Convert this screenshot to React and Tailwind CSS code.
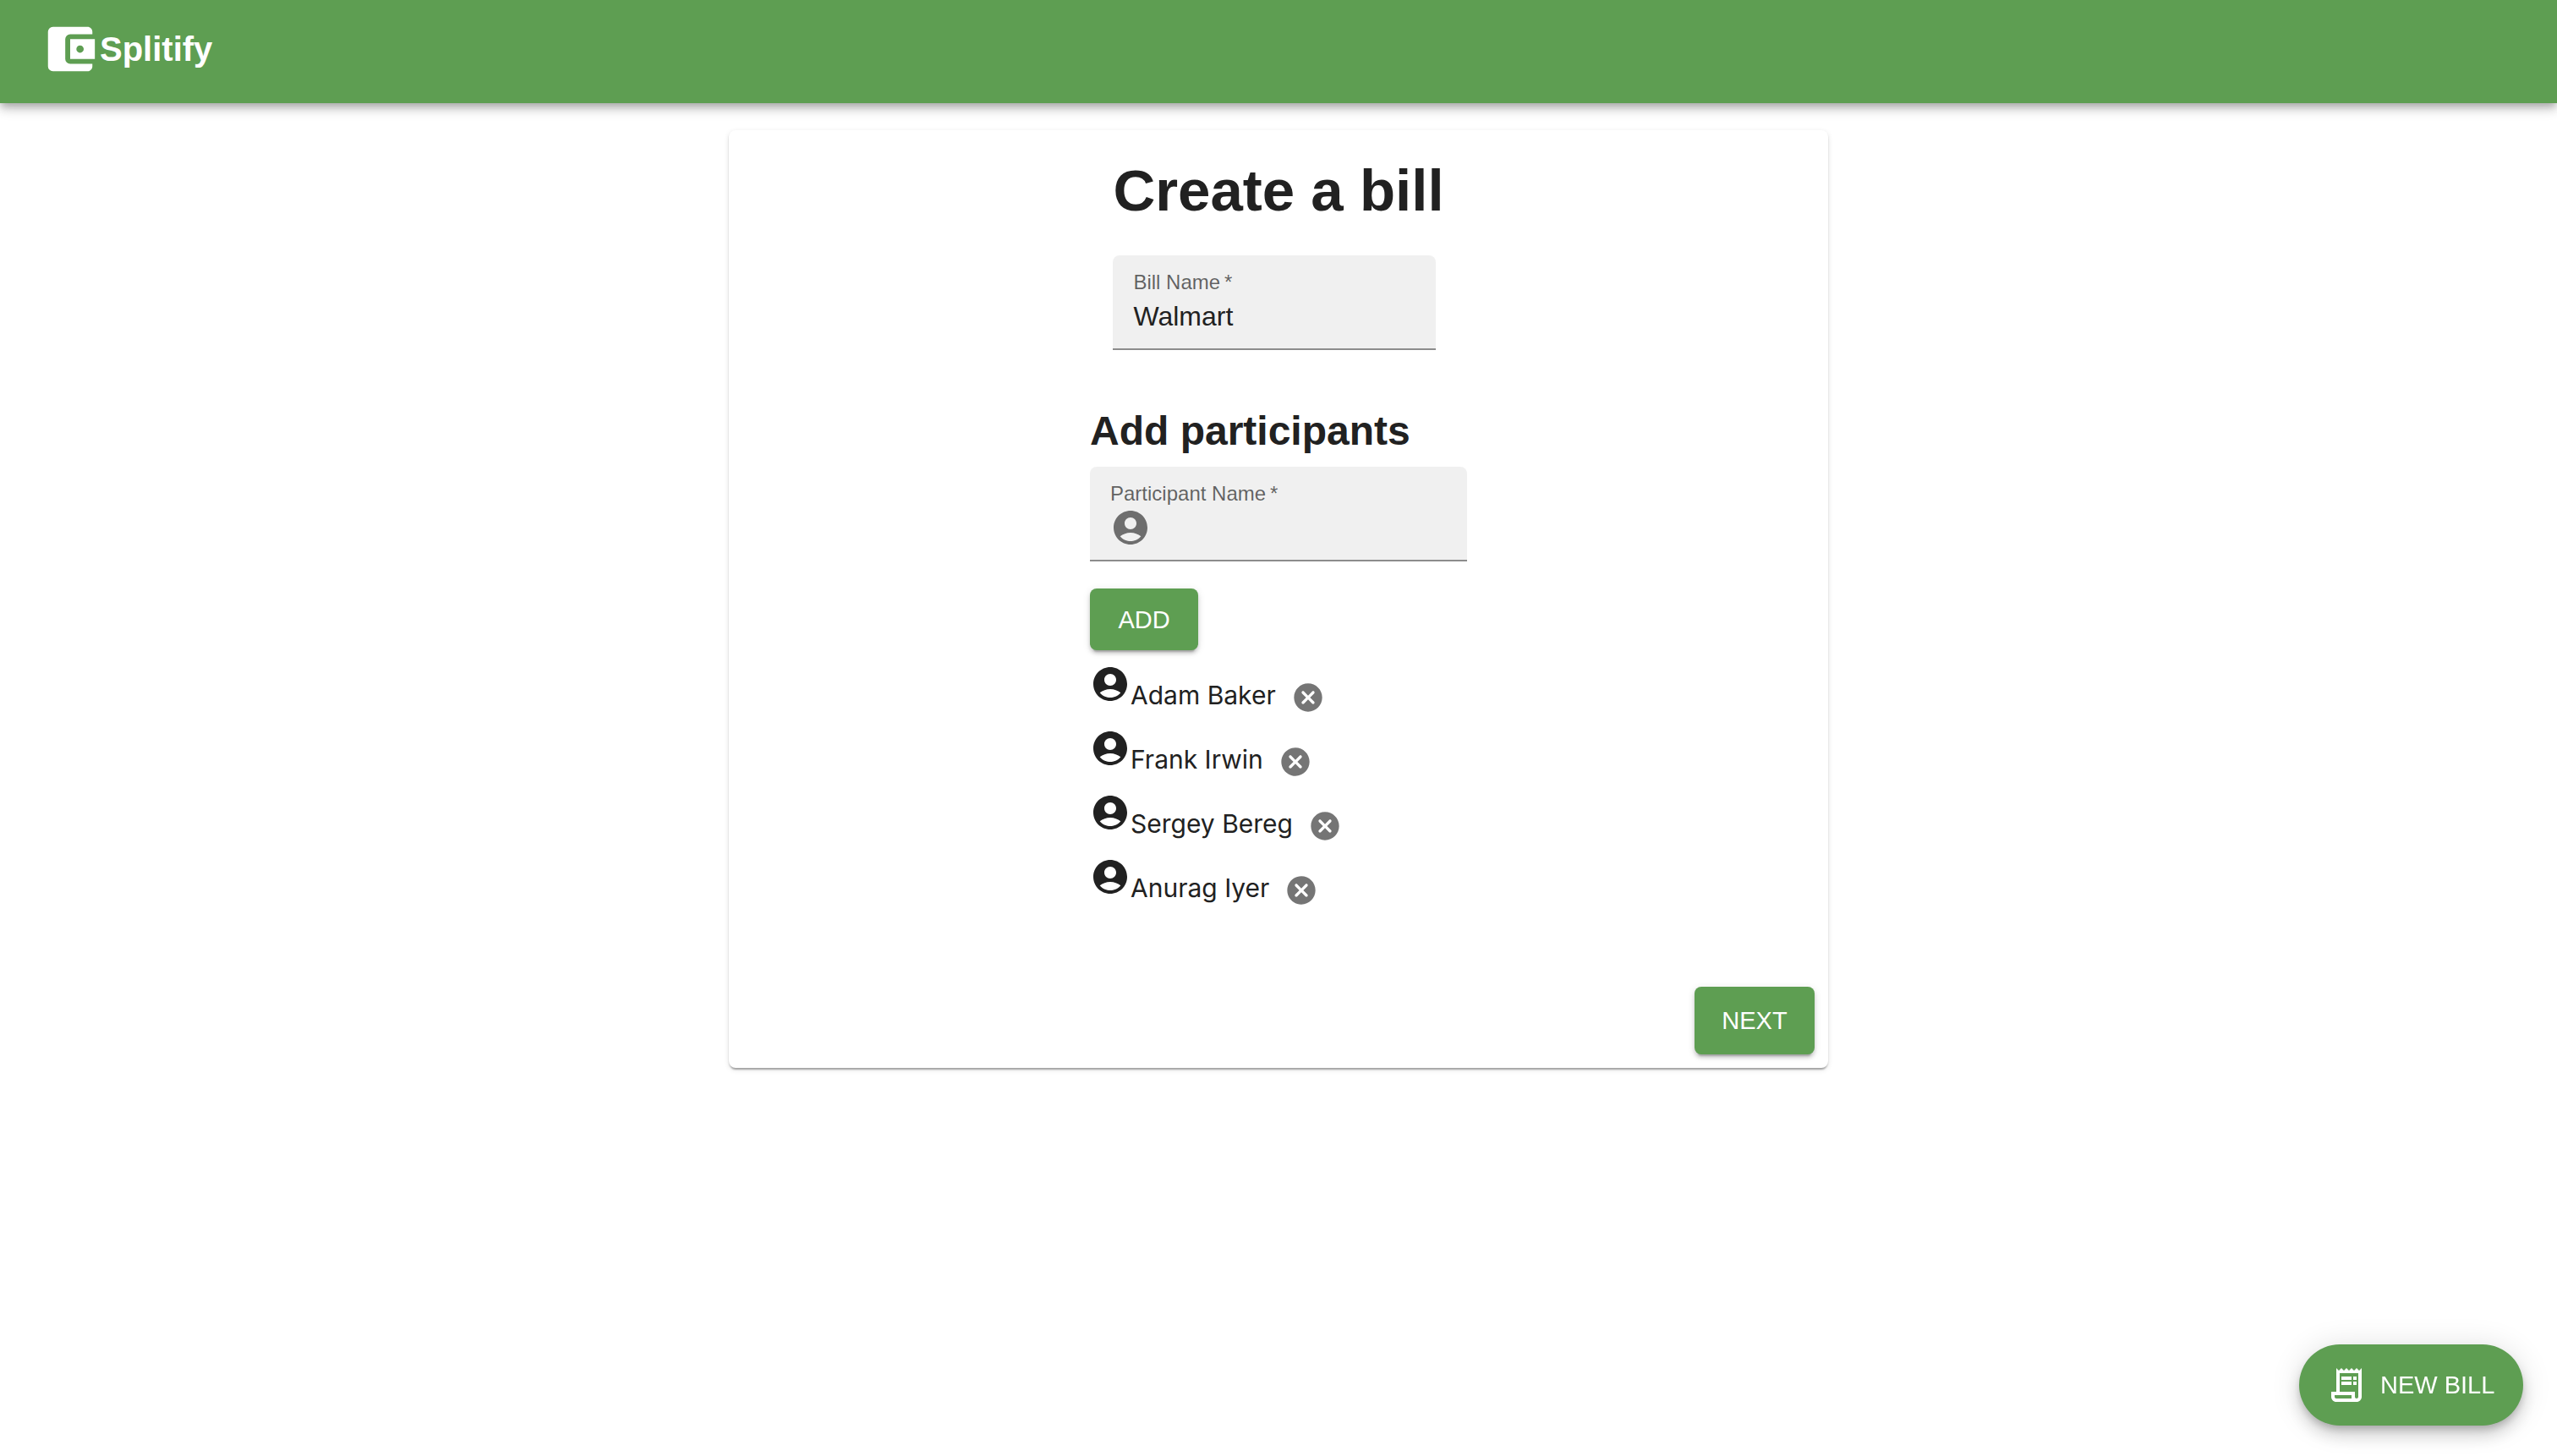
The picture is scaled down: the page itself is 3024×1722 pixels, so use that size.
import { useState } from "react";
import { MdAccountBalanceWallet, MdOutlineReceiptLong } from "react-icons/md";

const RAISED =
  "bg-[#5e9e52] text-[29px] leading-8 text-white uppercase shadow-[0_6px_2px_-4px_rgba(0,0,0,0.2),0_4px_4px_0_rgba(0,0,0,0.14),0_2px_10px_0_rgba(0,0,0,0.12)]";

function AccountCircle({ className }) {
  return (
    <svg viewBox="0 0 24 24" fill="currentColor" className={className} aria-hidden="true">
      <path d="M12 2C6.48 2 2 6.48 2 12s4.48 10 10 10 10-4.48 10-10S17.52 2 12 2zm0 4c1.93 0 3.5 1.57 3.5 3.5S13.93 13 12 13s-3.5-1.57-3.5-3.5S10.07 6 12 6zm0 14c-2.03 0-4.43-.82-6.14-2.88C7.55 15.8 9.68 15 12 15s4.45.8 6.14 2.12C16.43 19.18 14.03 20 12 20z" />
    </svg>
  );
}

function CancelRounded({ className }) {
  return (
    <svg viewBox="0 0 24 24" fill="currentColor" className={className} aria-hidden="true">
      <path d="M12 2C6.47 2 2 6.47 2 12s4.47 10 10 10 10-4.47 10-10S17.53 2 12 2zm4.3 14.3c-.39.39-1.02.39-1.41 0L12 13.41 9.11 16.3c-.39.39-1.02.39-1.41 0-.39-.39-.39-1.02 0-1.41L10.59 12 7.7 9.11c-.39-.39-.39-1.02 0-1.41.39-.39 1.02-.39 1.41 0L12 10.59l2.89-2.89c.39-.39 1.02-.39 1.41 0 .39.39.39 1.02 0 1.41L13.41 12l2.89 2.89c.38.38.38 1.02 0 1.41z" />
    </svg>
  );
}

function Field({ id, label, className, icon, value, onChange }) {
  return (
    <div
      className={`flex h-28 flex-col rounded-t-lg border-b-2 border-black/42 bg-black/6 px-6 pt-[18px] ${className}`}
    >
      <label htmlFor={id} className="text-2xl leading-7 text-black/60">
        {label}
        {"\u2009*"}
      </label>
      <div className="mt-0.5 flex h-12 items-center gap-4">
        {icon}
        <input
          id={id}
          type="text"
          required
          value={value}
          onChange={onChange}
          className="h-12 w-full min-w-0 bg-transparent text-[32px] leading-9 text-[#212121] outline-none"
        />
      </div>
    </div>
  );
}

export default function App() {
  const [billName, setBillName] = useState("Walmart");
  const [participant, setParticipant] = useState("");
  const [people, setPeople] = useState([
    "Adam Baker",
    "Frank Irwin",
    "Sergey Bereg",
    "Anurag Iyer",
  ]);

  const add = () => {
    if (participant.trim()) {
      setPeople([...people, participant.trim()]);
      setParticipant("");
    }
  };

  return (
    <div className="min-h-screen bg-white font-['Liberation_Sans',Arial,sans-serif] text-[#212121]">
      <header className="flex h-[122px] items-center bg-[#5e9e52] px-12 pb-1.5 text-white shadow-[0_4px_8px_-2px_rgba(0,0,0,0.2),0_8px_10px_0_rgba(0,0,0,0.14),0_2px_20px_0_rgba(0,0,0,0.12)]">
        <a href="#" className="flex items-center">
          <MdAccountBalanceWallet className="size-[70px]" />
          <span className="text-[40px] leading-[46px] font-bold">Splitify</span>
        </a>
      </header>

      <main className="mx-auto mt-8 flex w-full max-w-[1300px] flex-col items-center rounded-lg bg-white px-4 pt-8 pb-4 shadow-[0_4px_2px_-2px_rgba(0,0,0,0.2),0_2px_2px_0_rgba(0,0,0,0.14),0_2px_6px_0_rgba(0,0,0,0.12)]">
        <div>
          <h1 className="text-[69px] leading-20 font-bold">Create a bill</h1>
          <Field
            id="bill-name"
            label="Bill Name"
            className="mt-9 w-[382px]"
            value={billName}
            onChange={(e) => setBillName(e.target.value)}
          />
        </div>

        <section className="mt-17">
          <h2 className="text-5xl leading-14 font-bold">Add participants</h2>
          <Field
            id="participant-name"
            label="Participant Name"
            className="mt-[14px] w-[446px]"
            icon={<AccountCircle className="size-12 shrink-0 text-black/54" />}
            value={participant}
            onChange={(e) => setParticipant(e.target.value)}
          />
          <button
            type="button"
            onClick={add}
            className={`mt-8 h-[73px] w-32 rounded-lg ${RAISED}`}
          >
            Add
          </button>
          <ul className="mt-4">
            {people.map((name) => (
              <li key={name} className="flex h-19 items-start">
                <AccountCircle className="size-12 shrink-0" />
                <div className="flex items-start gap-[18px] pt-5">
                  <span className="font-['Inter',sans-serif] text-[30px] leading-[34px]">{name}</span>
                  <button
                    type="button"
                    aria-label={`Remove ${name}`}
                    onClick={() => setPeople(people.filter((p) => p !== name))}
                    className="text-[#757575]"
                  >
                    <CancelRounded className="size-10" />
                  </button>
                </div>
              </li>
            ))}
          </ul>
        </section>

        <button type="button" className={`mt-[78px] h-20 min-w-[142px] self-end rounded-lg px-8 ${RAISED}`}>
          Next
        </button>
      </main>

      <button
        type="button"
        className="fixed right-10 bottom-9 flex h-24 min-w-[265px] items-center gap-4 rounded-full bg-[#5e9e52] px-8 text-[29px] leading-8 text-white uppercase shadow-[0_6px_10px_-2px_rgba(0,0,0,0.2),0_12px_20px_0_rgba(0,0,0,0.14),0_2px_36px_0_rgba(0,0,0,0.12)]"
      >
        <MdOutlineReceiptLong className="size-12" />
        New Bill
      </button>
    </div>
  );
}
